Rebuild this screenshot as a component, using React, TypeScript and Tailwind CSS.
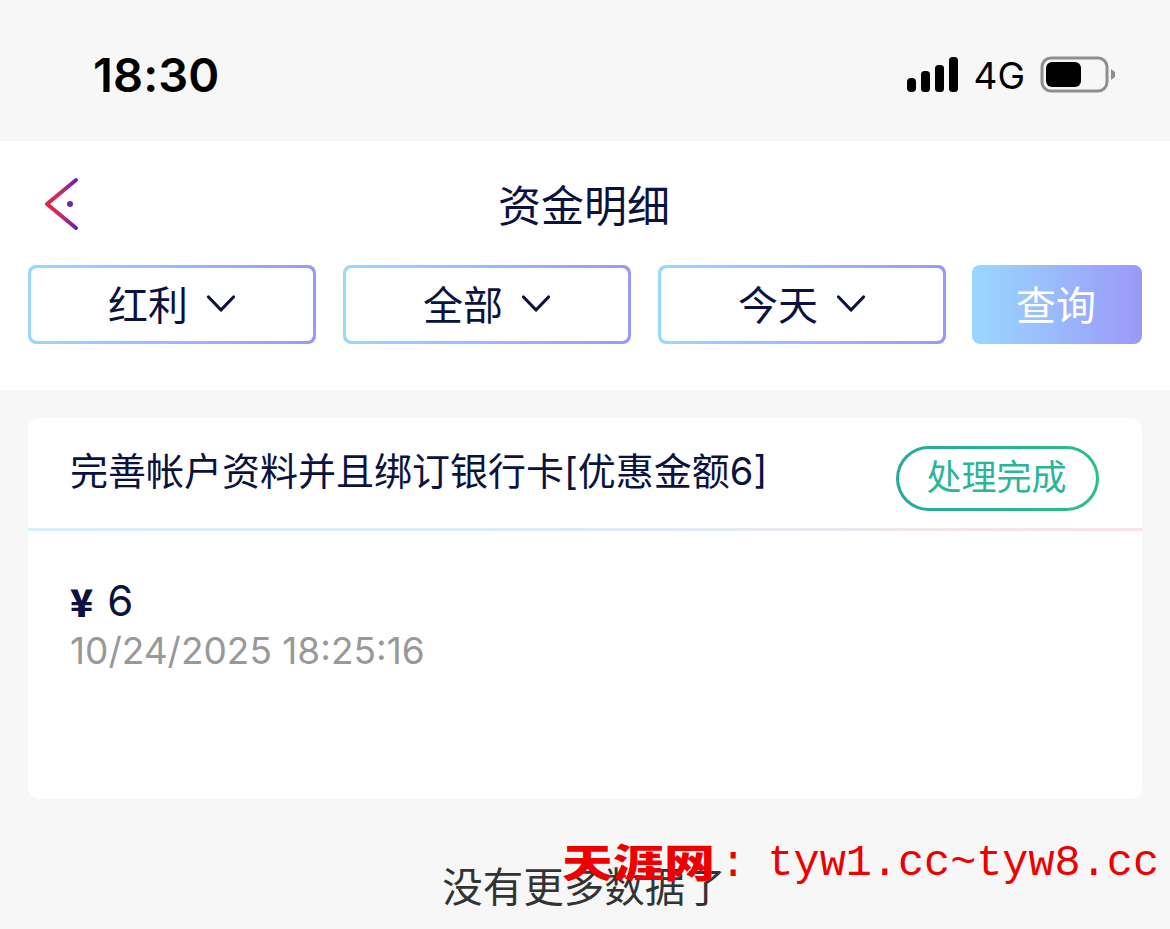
const cjk = "font-['Inter','Noto_Sans_CJK_SC',sans-serif]";

function FilterBox({ label }: { label: string }) {
  return (
    <div className="h-[79px] w-[288px] shrink-0 rounded-[8px] bg-linear-to-r from-[#99d8ff] to-[#9a98f8] p-[3px]">
      <div className="flex h-full items-center justify-center gap-[18px] rounded-[6px] bg-white">
        <span className="mt-[2px] text-[40px] leading-none text-[#0b1240]">{label}</span>
        <svg width="30" height="20" viewBox="0 0 30 20" fill="none" className="mt-[-2px]">
          <path d="M2.5 3 L15 16 L27.5 3" stroke="#0b1240" strokeWidth="3.2" strokeLinecap="round" strokeLinejoin="round" />
        </svg>
      </div>
    </div>
  );
}

function StatusBar() {
  return (
    <div className="flex h-[141px] items-start justify-between bg-[#f7f7f7] pl-[93px] pr-[52px] pt-[47px] text-black">
      <span className="font-['Inter',sans-serif] text-[47px] font-semibold leading-[56px] tracking-[0.1px]">18:30</span>
      <div className="flex items-center pt-[9px]">
        <svg width="52" height="36" viewBox="0 0 52 36" fill="black">
          <rect x="0" y="21" width="9" height="14" rx="4" />
          <rect x="14" y="14" width="9" height="21" rx="3.5" />
          <rect x="28" y="8" width="9" height="27" rx="3.5" />
          <rect x="42" y="0" width="9" height="35" rx="3.5" />
        </svg>
        <span className="ml-[14px] font-['Inter',sans-serif] text-[37px] font-normal leading-none">4G</span>
        <svg width="78" height="38" viewBox="0 0 78 38" fill="none" className="ml-[15px]">
          <rect x="2" y="2" width="65" height="33" rx="9" stroke="#8f8f8f" strokeWidth="3" />
          <rect x="6" y="6" width="35" height="25" rx="6" fill="black" />
          <path d="M71 13 L75 16 L75 21 L71 24 Z" fill="#8f8f8f" />
        </svg>
      </div>
    </div>
  );
}

export default function App() {
  return (
    <div className={`relative h-[929px] w-[1170px] overflow-hidden bg-[#f7f7f7] ${cjk}`}>
      <StatusBar />

      {/* Header + filters */}
      <div className="h-[249px] bg-white px-[28px]">
        <div className="relative flex h-[124px] items-center justify-center pr-[2px] pt-[6px]">
          <svg width="36" height="54" viewBox="0 0 36 54" fill="none" className="absolute left-[16px] top-[36px]">
            <defs>
              <linearGradient id="back" x1="2" y1="0" x2="34" y2="0" gradientUnits="userSpaceOnUse">
                <stop offset="0" stopColor="#e0243a" />
                <stop offset="0.45" stopColor="#c92a6a" />
                <stop offset="1" stopColor="#5a1fc0" />
              </linearGradient>
            </defs>
            <path d="M32 3 L3 27 L32 51" stroke="url(#back)" strokeWidth="4" strokeLinecap="round" strokeLinejoin="round" />
            <circle cx="26" cy="27" r="3" fill="#6a28b0" />
          </svg>
          <h1 className="text-[43px] font-normal leading-none text-[#0b1240]">资金明细</h1>
        </div>
        <div className="flex items-start gap-[27px]">
          <FilterBox label="红利" />
          <FilterBox label="全部" />
          <FilterBox label="今天" />
          <button className="-ml-px h-[79px] w-[170px] shrink-0 rounded-[8px] bg-linear-to-r from-[#99d8ff] to-[#9a98f8] pr-[2px] pt-[2px] text-[40px] leading-none text-white">
            查询
          </button>
        </div>
      </div>

      {/* Record card */}
      <div className="mx-[28px] mt-[28px] h-[381px] rounded-[12px] bg-white">
        <div className="flex h-[110px] items-start justify-between pl-[42px] pr-[43px]">
          <div className="pt-[31px] text-[38px] leading-[44px] text-[#0b1240]">完善帐户资料并且绑订银行卡[优惠金额6]</div>
          <div className="mt-[28px] rounded-full bg-linear-to-r from-[#27a8a0] to-[#2dbf85] p-[3px]">
            <div className="flex h-[59px] w-[197px] items-center justify-center rounded-full bg-white pb-[2px] pr-[2px] text-[35px] leading-none text-[#2ab597]">
              处理完成
            </div>
          </div>
        </div>
        <div className="h-[3px] bg-linear-to-r from-[#d5f0fb] via-[#dcecf6] to-[#fbe3e6]" />
        <div className="pl-[42px] pt-[48px]">
          <div className="flex items-center text-[#0b1240]">
            <span className="font-['Noto_Sans_CJK_SC',sans-serif] text-[38px] font-black leading-[44px]">¥</span>
            <span className="ml-[14px] text-[42px] leading-[44px]">6</span>
          </div>
          <div className="mt-[7px] text-[37px] leading-[42px] text-[#999999]">10/24/2025 18:25:16</div>
        </div>
      </div>

      <div className="mt-[64px] text-center text-[40.5px] leading-[50px] text-[#333333]">
        <span className="ml-[-2px]">没有更多数据了</span>
      </div>

      {/* Watermark */}
      <div className="absolute left-[562px] top-[839px] flex items-center whitespace-nowrap text-[#ee0000]">
        <span className="-translate-y-[4px] scale-y-75 font-['Noto_Sans_CJK_SC',serif] text-[51px] font-black leading-[50px]">天涯网</span>
        <span className="ml-[5px] font-['Liberation_Mono',monospace] text-[44px] font-normal leading-[50px]">:</span>
        <span className="ml-[21px] font-['Liberation_Mono',monospace] text-[43.5px] font-normal leading-[50px]">tyw1.cc~tyw8.cc</span>
      </div>
    </div>
  );
}
